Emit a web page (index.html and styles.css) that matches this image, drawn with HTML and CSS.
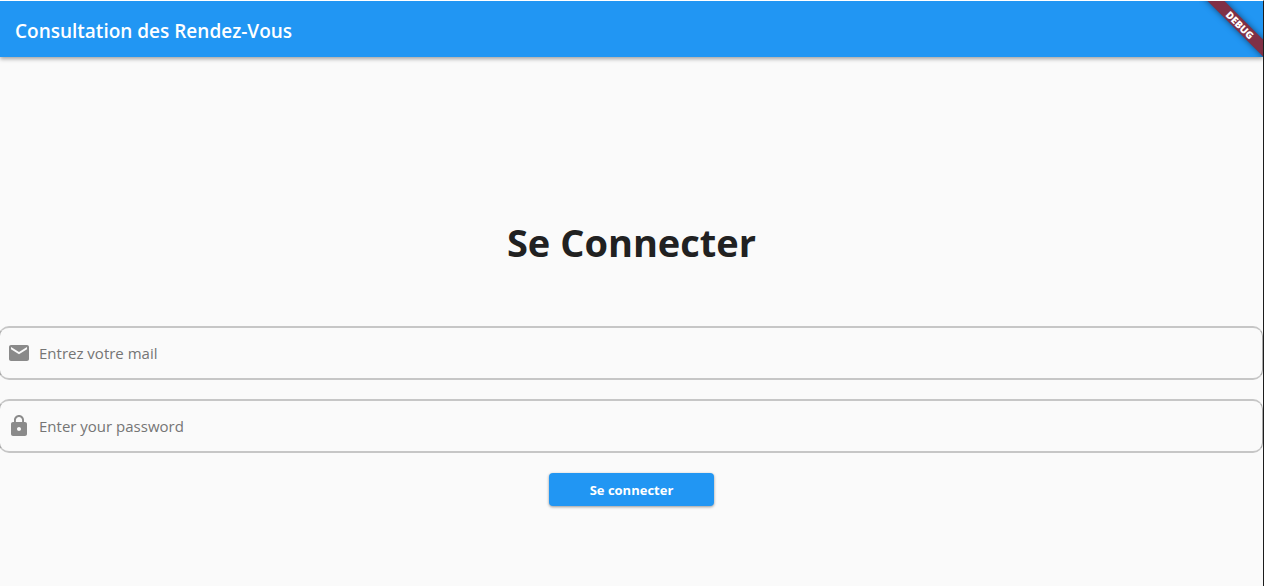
FILE: index.html
```html
<!DOCTYPE html>
<html lang="fr">
<head>
<meta charset="utf-8">
<meta name="viewport" content="width=device-width, initial-scale=1">
<title>Consultation des Rendez-Vous</title>
<link rel="stylesheet" href="styles.css">
</head>
<body>
<header class="app-bar">
  <span class="app-title">Consultation des Rendez-Vous</span>
</header>
<div class="banner-clip"><span class="banner">DEBUG</span></div>
<main class="content">
  <form class="login">
    <h1 class="heading">Se Connecter</h1>
    <label class="field">
      <svg class="icon" viewBox="0 0 24 24" aria-hidden="true"><path d="M20 4H4c-1.100 0-1.990.9-1.990 2L2 18c0 1.100.9 2 2 2h16c1.100 0 2-.9 2-2V6c0-1.100-.9-2-2-2zm0 4.300l-8 5-8-5V6l8 5 8-5v2.300z"/></svg>
      <input class="input" type="email" placeholder="Entrez votre mail" aria-label="Entrez votre mail">
    </label>
    <label class="field">
      <svg class="icon" viewBox="0 0 24 24" aria-hidden="true"><path d="M18 8h-1V6c0-2.760-2.240-5-5-5S7 3.240 7 6v2H6c-1.100 0-2 .9-2 2v10c0 1.100.9 2 2 2h12c1.100 0 2-.9 2-2V10c0-1.100-.9-2-2-2zm-6 9c-1.100 0-2-.9-2-2s.9-2 2-2 2 .9 2 2-.9 2-2 2zm3.100-9H8.900V6c0-1.710 1.390-3.100 3.100-3.100s3.100 1.390 3.100 3.100v2z"/></svg>
      <input class="input" type="password" placeholder="Enter your password" aria-label="Enter your password">
    </label>
    <button class="submit" type="button">Se connecter</button>
  </form>
</main>
</body>
</html>
```
FILE: styles.css
```css
* {
  box-sizing: border-box;
}

body {
  position: relative;
  display: flex;
  flex-direction: column;
  min-height: 100vh;
  margin: 0;
  border-top: 1px solid #fff;
  border-right: 1px solid #1c1c1c;
  background: #fafafa;
  color: #212121;
  font-family: "Segoe UI", "Open Sans", "Noto Sans", sans-serif;
}

.app-bar {
  display: flex;
  align-items: center;
  height: 56px;
  padding: 4px 15px 0;
  background: #2196f3;
  box-shadow: 0 2px 4px rgba(0, 0, 0, 0.35);
  color: #fff;
}

.app-title {
  font-size: 19px;
  font-weight: 600;
  line-height: 24px;
}

.banner-clip {
  position: absolute;
  top: 0;
  right: 0;
  width: 64px;
  height: 56px;
  overflow: hidden;
  pointer-events: none;
}

.banner {
  position: absolute;
  top: 18px;
  right: -27px;
  width: 100px;
  height: 12px;
  background: #803046;
  box-shadow: 0 0 6px rgba(0, 0, 0, 0.5);
  color: #fff;
  font-size: 10px;
  font-weight: 800;
  line-height: 12px;
  text-align: center;
  transform: rotate(45deg);
}

.content {
  display: flex;
  flex: 1;
  flex-direction: column;
  justify-content: center;
}

.login {
  display: flex;
  flex-direction: column;
}

.heading {
  margin: 0;
  padding: 78px 0 57px;
  font-size: 38px;
  font-weight: 700;
  line-height: 54px;
  text-align: center;
}

.field {
  display: flex;
  align-items: center;
  gap: 8px;
  height: 54px;
  margin: 0 0 19px -1px;
  padding: 0 8px 0 7px;
  border: solid;
  border-width: 2px 1px;
  border-color: #c6c6c6 #a8a8a8;
  border-radius: 10px;
}

.icon {
  flex: none;
  width: 24px;
  height: 24px;
  fill: #8a8a8a;
}

.input {
  flex: 1;
  min-width: 0;
  padding: 0;
  border: 0;
  outline: 0;
  background: transparent;
  color: #212121;
  font-family: inherit;
  font-size: 15px;
  line-height: 24px;
}

.input::placeholder {
  color: #757575;
  opacity: 1;
}

.submit {
  align-self: center;
  height: 33px;
  margin: 1px 0 0;
  padding: 0 41px;
  border: 0;
  border-radius: 4px;
  background: #2196f3;
  box-shadow: 0 1px 3px rgba(0, 0, 0, 0.4);
  color: #fff;
  font-family: inherit;
  font-size: 13px;
  font-weight: 700;
  line-height: 20px;
}
```
